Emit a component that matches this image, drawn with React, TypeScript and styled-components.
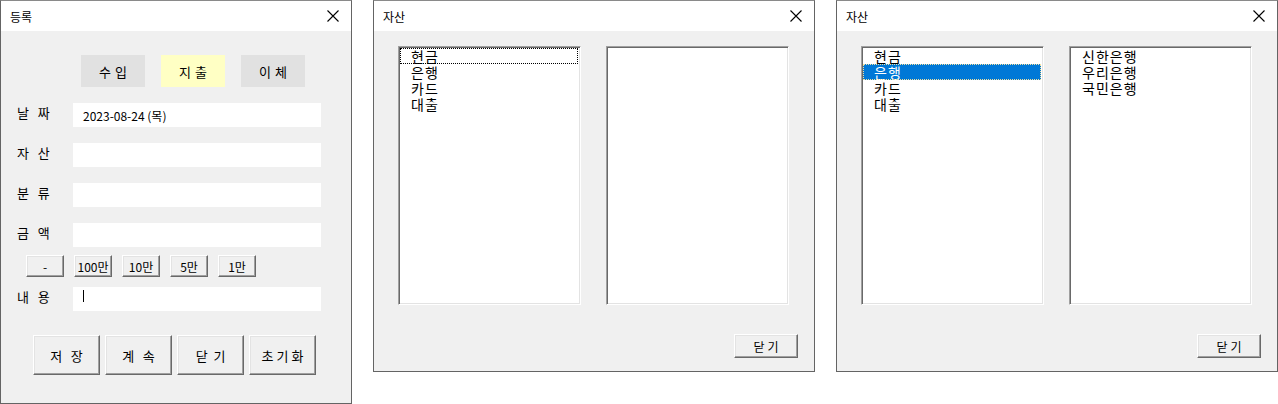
import styled, { createGlobalStyle } from 'styled-components'

const GlobalStyle = createGlobalStyle`
    body {
        margin: 0;
        background: #ffffff;
        font-family: "Noto Sans CJK KR", "Liberation Sans", sans-serif;
        color: #000000;
    }
`

const Desktop = styled.div`
    display: flex;
    align-items: flex-start;
    gap: 21px;
    width: 1278px;
    height: 404px;
    overflow: hidden;
`

const Window = styled.div<{ $w: number; $h: number }>`
    width: ${p => p.$w}px;
    height: ${p => p.$h}px;
    box-sizing: border-box;
    border: 1px solid #646464;
    border-top-color: #8a8a8a;
    background: #f0f0f0;
    display: flex;
    flex-direction: column;
`

const TitleBar = styled.div`
    height: 30px;
    background: #ffffff;
    display: flex;
    align-items: center;
    justify-content: space-between;
    padding: 0 6px 0 9px;
    font-size: 12px;
    flex-shrink: 0;
`

const CloseIcon = () => (
    <svg width="14" height="14" viewBox="0 0 14 14" style={{ marginRight: 5 }}>
        <path d="M1.5 1.5 L12.5 12.5 M12.5 1.5 L1.5 12.5" stroke="#000" strokeWidth="1.1" fill="none" />
    </svg>
)

/* ---------- 등록 window ---------- */

const Form = styled.div`
    display: flex;
    flex-direction: column;
    padding: 24px 0 0 0;
`

const TypeRow = styled.div`
    display: flex;
    gap: 16px;
    padding-left: 80px;
    margin-bottom: 16px;
`

const TypeButton = styled.div<{ $active?: boolean }>`
    width: 64px;
    height: 32px;
    background: ${p => (p.$active ? '#ffffc4' : '#e1e1e1')};
    display: flex;
    align-items: center;
    justify-content: center;
    font-size: 13px;
    letter-spacing: 4px;
    text-indent: 4px;
`

const FieldRow = styled.div<{ $gap: number }>`
    display: flex;
    align-items: center;
    height: 24px;
    margin-bottom: ${p => p.$gap}px;
`

const Label = styled.div`
    width: 56px;
    padding-left: 16px;
    font-size: 13px;
    letter-spacing: 3px;
    margin-top: -5px;
`

const Field = styled.div`
    width: 248px;
    height: 24px;
    background: #ffffff;
    display: flex;
    align-items: center;
    padding-left: 10px;
    box-sizing: border-box;
    font-size: 12px;
`

const Caret = styled.span`
    display: inline-block;
    width: 1px;
    height: 12px;
    background: #000;
    margin-top: -6px;
`

const AmountRow = styled.div`
    display: flex;
    gap: 10px;
    padding-left: 25px;
    margin-bottom: 10px;
`

const ClassicButton = styled.div<{ $w: number; $h: number; $size?: number; $spacing?: number }>`
    width: ${p => p.$w}px;
    height: ${p => p.$h}px;
    box-sizing: border-box;
    background: #f0f0f0;
    border-top: 1px solid #ffffff;
    border-left: 1px solid #ffffff;
    border-right: 1px solid #696969;
    border-bottom: 1px solid #696969;
    box-shadow: inset -1px -1px 0 #a0a0a0, inset 1px 1px 0 #e3e3e3;
    display: flex;
    align-items: center;
    justify-content: center;
    font-size: ${p => p.$size ?? 12}px;
    letter-spacing: ${p => p.$spacing ?? 0}px;
    text-indent: ${p => p.$spacing ?? 0}px;
    white-space: pre;
`

const ActionRow = styled.div`
    display: flex;
    gap: 5px;
    padding-left: 32px;
    margin-top: 24px;
`

/* ---------- 자산 window ---------- */

const Lists = styled.div`
    display: flex;
    gap: 25px;
    padding: 15px 25px 0 24px;
`

const ListBox = styled.div`
    flex: 1;
    height: 259px;
    box-sizing: border-box;
    background: #ffffff;
    border-top: 1px solid #a0a0a0;
    border-left: 1px solid #a0a0a0;
    border-right: 1px solid #ffffff;
    border-bottom: 1px solid #ffffff;
    box-shadow: inset 1px 1px 0 #696969, inset -1px -1px 0 #e3e3e3;
    padding: 1px 2px 2px 1px;
`

const Item = styled.div<{ $selected?: boolean; $focused?: boolean }>`
    height: 16px;
    line-height: 16px;
    font-size: 14px;
    letter-spacing: 1px;
    padding-left: 11px;
    box-sizing: border-box;
    white-space: nowrap;
    background: ${p => (p.$selected ? '#0078d7' : 'transparent')};
    color: ${p => (p.$selected ? '#ffffff' : '#000000')};
    outline: ${p => (p.$focused ? `1px dotted ${p.$selected ? '#f0e0a0' : '#000'}` : 'none')};
    outline-offset: -1px;
`

const Footer = styled.div`
    display: flex;
    justify-content: flex-end;
    padding: 29px 16px 0 0;
`

const assets = ['현금', '은행', '카드', '대출']
const banks = ['신한은행', '우리은행', '국민은행']

const AssetWindow = ({ selected }: { selected: number | null }) => (
    <Window $w={442} $h={372}>
        <TitleBar>
            <span>자산</span>
            <CloseIcon />
        </TitleBar>
        <Lists>
            <ListBox>
                {assets.map((a, i) => (
                    <Item
                        key={a}
                        $selected={selected === i}
                        $focused={selected === null ? i === 0 : selected === i}
                    >
                        {a}
                    </Item>
                ))}
            </ListBox>
            <ListBox>
                {selected === 1 && banks.map(b => <Item key={b}>{b}</Item>)}
            </ListBox>
        </Lists>
        <Footer>
            <ClassicButton $w={64} $h={24} $size={12} $spacing={3}>닫기</ClassicButton>
        </Footer>
    </Window>
)

export default function App() {
    return (
        <>
            <GlobalStyle />
            <Desktop>
                <Window $w={352} $h={404}>
                    <TitleBar>
                        <span>등록</span>
                        <CloseIcon />
                    </TitleBar>
                    <Form>
                        <TypeRow>
                            <TypeButton>수입</TypeButton>
                            <TypeButton $active>지출</TypeButton>
                            <TypeButton>이체</TypeButton>
                        </TypeRow>
                        <FieldRow $gap={16}>
                            <Label>날 짜</Label>
                            <Field>2023-08-24 (목)</Field>
                        </FieldRow>
                        <FieldRow $gap={16}>
                            <Label>자 산</Label>
                            <Field />
                        </FieldRow>
                        <FieldRow $gap={16}>
                            <Label>분 류</Label>
                            <Field />
                        </FieldRow>
                        <FieldRow $gap={8}>
                            <Label>금 액</Label>
                            <Field />
                        </FieldRow>
                        <AmountRow>
                            {['-', '100만', '10만', '5만', '1만'].map(v => (
                                <ClassicButton key={v} $w={38} $h={22} $size={12}>{v}</ClassicButton>
                            ))}
                        </AmountRow>
                        <FieldRow $gap={0}>
                            <Label>내 용</Label>
                            <Field><Caret /></Field>
                        </FieldRow>
                        <ActionRow>
                            <ClassicButton $w={67} $h={40} $size={13}>{'저   장'}</ClassicButton>
                            <ClassicButton $w={67} $h={40} $size={13}>{'계   속'}</ClassicButton>
                            <ClassicButton $w={67} $h={40} $size={13}>{'닫  기'}</ClassicButton>
                            <ClassicButton $w={67} $h={40} $size={13} $spacing={3}>초기화</ClassicButton>
                        </ActionRow>
                    </Form>
                </Window>
                <AssetWindow selected={null} />
                <AssetWindow selected={1} />
            </Desktop>
        </>
    )
}
